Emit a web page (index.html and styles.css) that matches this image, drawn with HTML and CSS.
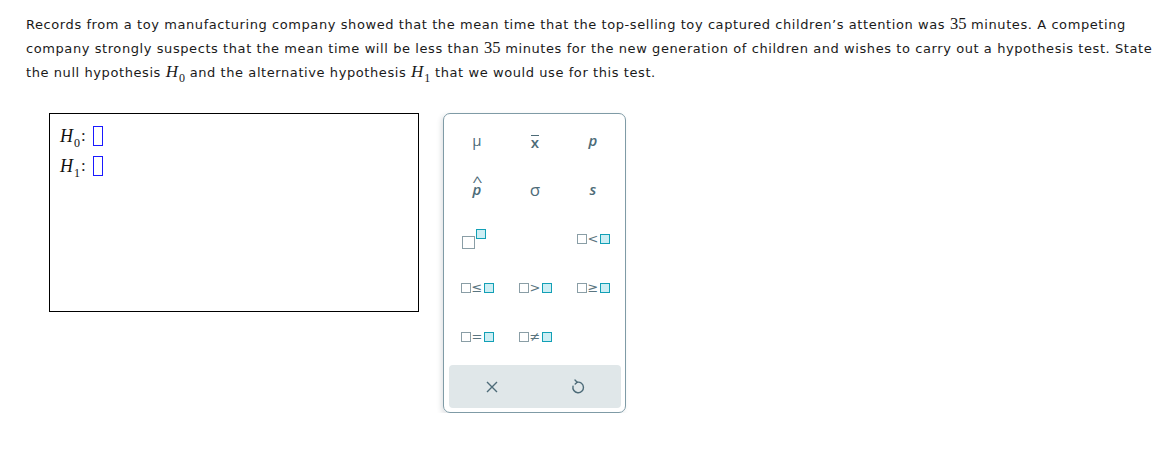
FILE: index.html
```html
<!DOCTYPE html>
<html>
<head>
<meta charset="utf-8">
<link rel="stylesheet" href="styles.css">
</head>
<body>
<div class="question">Records from a toy manufacturing company showed that the mean time that the top-selling toy captured children’s attention was <span class="num">35</span> minutes. A competing company strongly suspects that the mean time will be less than <span class="num">35</span> minutes for the new generation of children and wishes to carry out a hypothesis test. State the null hypothesis <span class="mvar">H<sub>0</sub></span> and the alternative hypothesis <span class="mvar">H<sub>1</sub></span> that we would use for this test.</div>
<div class="work">
  <div class="answer">
    <div class="hline"><span class="mvar">H<sub>0</sub></span><span class="colon">:</span><span class="slot"></span></div>
    <div class="hline"><span class="mvar">H<sub>1</sub></span><span class="colon">:</span><span class="slot"></span></div>
  </div>
  <div class="palette">
    <div class="grid">
      <div class="key"><span class="sym mu">μ</span></div>
      <div class="key"><span class="sym xbar">x</span></div>
      <div class="key"><span class="sym ital">p</span></div>
      <div class="key"><span class="sym ital phat">p</span></div>
      <div class="key"><span class="sym sigma">σ</span></div>
      <div class="key"><span class="sym ital">s</span></div>
      <div class="key"><span class="sup"><span class="bx big"></span><span class="bx fill small"></span></span></div>
      <div class="key"></div>
      <div class="key"><span class="rel"><span class="bx"></span><span class="op">&lt;</span><span class="bx fill"></span></span></div>
      <div class="key"><span class="rel"><span class="bx"></span><span class="op">≤</span><span class="bx fill"></span></span></div>
      <div class="key"><span class="rel"><span class="bx"></span><span class="op">&gt;</span><span class="bx fill"></span></span></div>
      <div class="key"><span class="rel"><span class="bx"></span><span class="op">≥</span><span class="bx fill"></span></span></div>
      <div class="key"><span class="rel"><span class="bx"></span><span class="op">=</span><span class="bx fill"></span></span></div>
      <div class="key"><span class="rel"><span class="bx"></span><span class="op">≠</span><span class="bx fill"></span></span></div>
      <div class="key"></div>
    </div>
    <div class="actions">
      <div class="act">
        <svg width="14" height="14" viewBox="0 0 14 14"><path d="M2 2 L12 12 M12 2 L2 12" stroke="#4d6b78" stroke-width="1.4" fill="none"/></svg>
      </div>
      <div class="act">
        <svg width="16" height="18" viewBox="0 0 16 18"><path d="M7.2 4.2 A5.3 5.3 0 1 1 3 8.2" stroke="#4d6b78" stroke-width="1.4" fill="none" stroke-linecap="round"/><path d="M5 2 L7.2 4.2 L5.2 6" stroke="#4d6b78" stroke-width="1.4" fill="none" stroke-linecap="round" stroke-linejoin="round"/></svg>
      </div>
    </div>
  </div>
</div>
</body>
</html>
```

FILE: styles.css
```css
html, body {
  margin: 0;
  padding: 0;
  background: #ffffff;
}
body {
  font-family: "DejaVu Sans", Verdana, sans-serif;
  color: #1a1a1a;
}
.question {
  width: 1134px;
  padding: 13px 0 0 26px;
  font-size: 13px;
  line-height: 24px;
  letter-spacing: 0.58px;
}
.num {
  font-family: "Liberation Serif", serif;
  font-size: 16.5px;
  line-height: 16px;
  letter-spacing: 0;
}
.mvar {
  font-family: "Liberation Serif", serif;
  font-style: italic;
  font-size: 17px;
  line-height: 16px;
  letter-spacing: 0;
}
.mvar sub {
  font-style: normal;
  font-size: 12px;
  vertical-align: -5px;
  line-height: 0;
  margin-left: 1px;
}
.work {
  display: flex;
  align-items: flex-start;
  gap: 24px;
  padding: 28px 0 0 49px;
}
.answer {
  width: 368px;
  height: 197px;
  border: 1px solid #000000;
  display: flex;
  flex-direction: column;
}
.hline {
  display: flex;
  align-items: center;
  height: 30px;
  padding-left: 10px;
}
.hline:first-child {
  margin-top: 7px;
}
.hline .mvar {
  font-size: 18px;
  line-height: 1;
  color: #111;
}
.colon {
  font-family: "Liberation Serif", serif;
  font-size: 17px;
  margin-left: 1px;
  margin-right: 7px;
}
.slot {
  width: 8px;
  height: 18px;
  border: 1.5px solid #1a1aff;
  display: inline-block;
}
.palette {
  width: 174px;
  height: 296px;
  border: 1px solid #7f9ba6;
  border-radius: 7px;
  box-shadow: -2px 2px 5px rgba(40, 60, 70, 0.14);
  padding: 2px 3px 0 4px;
  display: flex;
  flex-direction: column;
}
.grid {
  display: grid;
  grid-template-columns: repeat(3, 58px);
  grid-auto-rows: 49px;
}
.key {
  display: flex;
  align-items: center;
  justify-content: center;
  color: #4d6b78;
}
.sym {
  font-family: "Open Sans", "DejaVu Sans", sans-serif;
  font-size: 16px;
  line-height: 1;
}
.mu {
  font-size: 15px;
}
.ital {
  font-style: italic;
  font-weight: 600;
  font-size: 15px;
}
.xbar {
  font-weight: 600;
  font-size: 15px;
  display: inline-block;
  line-height: 11px;
  border-top: 1.5px solid #4d6b78;
  padding-top: 1px;
  margin-top: 2px;
}
.phat {
  position: relative;
}
.phat::before {
  content: "^";
  position: absolute;
  left: 0px;
  top: -8px;
  font-style: normal;
  font-weight: 400;
  font-size: 15px;
  transform: scaleX(1.2);
}
.sigma {
  font-size: 17px;
}
.sup {
  display: flex;
  align-items: flex-start;
  gap: 1px;
  margin-left: -6px;
}
.bx {
  display: inline-block;
  width: 8px;
  height: 8px;
  border: 1.6px solid #8a9ea6;
  background: #ffffff;
}
.bx.fill {
  border-color: #12a0b6;
  background: #cdeef4;
}
.bx.big {
  width: 11px;
  height: 11px;
  margin-top: 7px;
}
.bx.small {
  width: 8px;
  height: 8px;
}
.rel {
  display: flex;
  align-items: center;
  gap: 1px;
}
.op {
  font-family: "DejaVu Sans", sans-serif;
  font-size: 13px;
  line-height: 1;
  color: #5a7580;
  width: 11px;
  text-align: center;
}
.actions {
  margin-top: 4px;
  height: 43px;
  width: 172px;
  margin-left: 1px;
  background: #e0e7e9;
  border-radius: 4px;
  display: flex;
}
.act {
  flex: 1;
  display: flex;
  align-items: center;
  justify-content: center;
}
```
